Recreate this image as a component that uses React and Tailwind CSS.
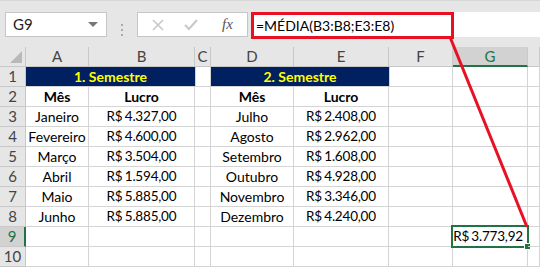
import React from "react";

const cols = [
  { k: "A", w: "w-[63px]" },
  { k: "B", w: "w-[106px]" },
  { k: "C", w: "w-[16px]" },
  { k: "D", w: "w-[83px]" },
  { k: "E", w: "w-[95px]" },
  { k: "F", w: "w-[64px]" },
  { k: "G", w: "w-[75px]" },
  { k: "H", w: "w-[12px]" },
];

const rows = [
  ["Janeiro", "R$ 4.327,00", "Julho", "R$ 2.408,00"],
  ["Fevereiro", "R$ 4.600,00", "Agosto", "R$ 2.962,00"],
  ["Março", "R$ 3.504,00", "Setembro", "R$ 1.608,00"],
  ["Abril", "R$ 1.594,00", "Outubro", "R$ 4.928,00"],
  ["Maio", "R$ 5.885,00", "Novembro", "R$ 3.346,00"],
  ["Junho", "R$ 5.885,00", "Dezembro", "R$ 4.240,00"],
];

const cell = "h-[20px] border-r border-b border-[#d4d4d4] flex items-center justify-center shrink-0 whitespace-nowrap";
const money = "text-[13.5px] tracking-[-0.2px] [word-spacing:-1px]";

const RowHead = ({ n, active }) => (
  <div
    className={`w-[26px] h-[20px] shrink-0 flex items-center justify-center border-b border-[#c8c8c8] text-[15px] ${
      active
        ? "bg-[#d2d2d2] text-[#217346] border-r-2 border-r-[#217346]"
        : "bg-[#e6e6e6] text-[#444] border-r border-r-[#c8c8c8]"
    }`}
  >
    {n}
  </div>
);

const Row = ({ n, values, active, children }) => (
  <div className="flex">
    <RowHead n={n} active={active} />
    {children ||
      cols.map((c, i) => (
        <div key={c.k} className={`${cell} ${c.w} ${i === 1 || i === 4 ? money : ""}`}>
          {values && values[i]}
        </div>
      ))}
  </div>
);

export default function App() {
  return (
    <div className="w-[540px] h-[269px] bg-white overflow-hidden relative font-['Lato',sans-serif] text-[14px] text-black">
      {/* toolbar */}
      <div className="h-[47px] bg-[#e6e6e6] flex pt-[11px] border-t border-[#d6d6d6]">
        <div className="ml-[5px] w-[102px] h-[25px] bg-white border border-[#c6c6c6] flex items-center justify-between pl-[7px] pr-[8px] text-[15px] text-[#222]">
          <span>G9</span>
          <span className="w-0 h-0 border-l-[5px] border-r-[5px] border-t-[5px] border-l-transparent border-r-transparent border-t-[#777]" />
        </div>
        <div className="w-[30px] flex flex-col items-center justify-center gap-[3px]">
          <span className="w-[2px] h-[2px] bg-[#aaa]" />
          <span className="w-[2px] h-[2px] bg-[#aaa]" />
          <span className="w-[2px] h-[2px] bg-[#aaa]" />
        </div>
        <div className="w-[111px] h-[25px] bg-white border border-[#c6c6c6] flex items-center">
          <svg width="12" height="12" viewBox="0 0 12 12" className="ml-[14px]">
            <path d="M1 1L11 11M11 1L1 11" stroke="#c8c8c8" strokeWidth="1.6" />
          </svg>
          <svg width="14" height="12" viewBox="0 0 14 12" className="ml-[20px]">
            <path d="M1 6L5 10L13 1" stroke="#c8c8c8" strokeWidth="2" fill="none" />
          </svg>
          <span className="ml-[24px] font-['Liberation_Serif',serif] italic text-[15px] text-[#555]">
            fx
          </span>
        </div>
        <div className="ml-[3px] flex-1 h-[25px] bg-white">
          <div className="w-[203px] h-[27px] border-[3px] border-[#e81123] flex items-center pl-[2px] text-[14px] whitespace-nowrap">
            =MÉDIA(B3:B8;E3:E8)
          </div>
        </div>
      </div>

      {/* column headers */}
      <div className="flex h-[20px]">
        <div className="w-[26px] h-[20px] shrink-0 bg-[#e6e6e6] border-r border-b border-[#c8c8c8] relative">
          <svg width="12" height="12" viewBox="0 0 12 12" className="absolute right-[3px] bottom-[3px]">
            <path d="M12 0L12 12L0 12Z" fill="#b9b9b9" />
          </svg>
        </div>
        {cols.map((c) => (
          <div
            key={c.k}
            className={`${c.w} h-[20px] shrink-0 flex items-center justify-center border-r border-[#c8c8c8] text-[15px] ${
              c.k === "G"
                ? "bg-[#d2d2d2] text-[#217346] border-b-2 border-b-[#217346]"
                : "bg-[#e6e6e6] text-[#444] border-b border-b-[#c8c8c8]"
            }`}
          >
            {c.k !== "H" && c.k}
          </div>
        ))}
      </div>

      <Row n={1}>
        <div className="w-[169px] h-[20px] shrink-0 bg-[#002060] text-[#ffff00] font-bold flex items-center justify-center border-b border-[#d4d4d4]">
          1. Semestre
        </div>
        <div className={`${cell} w-[16px] border-l border-l-[#d4d4d4]`} />
        <div className="w-[178px] h-[20px] shrink-0 bg-[#002060] text-[#ffff00] font-bold flex items-center justify-center border-b border-[#d4d4d4]">
          2. Semestre
        </div>
        <div className={`${cell} w-[64px] border-l border-l-[#d4d4d4]`} />
        <div className={`${cell} w-[75px]`} />
        <div className={`${cell} w-[12px]`} />
      </Row>
      <Row n={2}>
        {cols.map((c, i) => (
          <div key={c.k} className={`${cell} ${c.w} font-bold`}>
            {["Mês", "Lucro", "", "Mês", "Lucro"][i]}
          </div>
        ))}
      </Row>
      {rows.map((r, i) => (
        <Row key={i} n={i + 3} values={[r[0], r[1], "", r[2], r[3]]} />
      ))}
      <Row n={9} active>
        {cols.map((c) => (
          <div key={c.k} className={`${cell} ${c.w} relative`}>
            {c.k === "G" && (
              <div className={`absolute left-[-2px] top-[-2px] w-[78px] h-[23px] border-2 border-[#217346] flex items-center justify-end pr-[4px] whitespace-nowrap ${money}`}>
                R$ 3.773,92
                <span className="absolute right-[-4px] bottom-[-4px] w-[7px] h-[7px] bg-[#217346] border border-white" />
              </div>
            )}
          </div>
        ))}
      </Row>
      <Row n={10} values={[]} />

      {/* arrow line */}
      <svg className="absolute left-0 top-0 pointer-events-none" width="540" height="269">
        <line x1="450" y1="37" x2="527" y2="227" stroke="#e81123" strokeWidth="3" />
      </svg>
    </div>
  );
}
